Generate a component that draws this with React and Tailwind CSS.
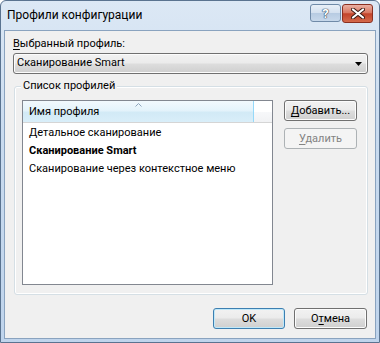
import React from "react";

const font = { fontFamily: 'Roboto, "Liberation Sans", sans-serif' };

function WinButton({ children, className = "", isDefault = false, disabled = false }) {
  const base = "flex items-center justify-center h-[21px] rounded-[3px] border text-[11px] leading-none";
  if (disabled) {
    return (
      <div className={`${base} border-[#adb2b5] bg-[#f4f4f4] text-[#838383] ${className}`}>{children}</div>
    );
  }
  return (
    <div
      className={`${base} ${isDefault ? "border-[#3c7fb1] shadow-[inset_0_0_0_1px_#c0e8f9]" : "border-[#707070] shadow-[inset_0_0_0_1px_#fcfcfc]"} bg-[linear-gradient(to_bottom,#f2f2f2_0%,#ebebeb_48%,#dddddd_52%,#cfcfcf_100%)] text-black ${className}`}
    >
      {children}
    </div>
  );
}

export default function App() {
  return (
    <div
      className="w-[380px] h-[343px] flex flex-col border border-[#5a7390] rounded-t-[6px] bg-[linear-gradient(to_bottom,#dce8f5_0%,#c9dbef_40%,#bfd4ec_100%)] overflow-hidden"
      style={font}
    >
      {/* title bar */}
      <div className="h-[29px] flex items-start shrink-0">
        <div className="pl-[6px] pt-[6px] text-[12px] leading-[16px] text-black">Профили конфигурации</div>
        <div className="ml-auto flex gap-[1px] pt-[3px] pr-[6px]">
          <div className="w-[31px] h-[18px] rounded-[3px] border border-[#6f8aa8] bg-[linear-gradient(to_bottom,#e9f0f8_0%,#d3e0ef_50%,#b7cbe2_52%,#c7d8eb_100%)] flex items-center justify-center">
            <span
              className="text-[13px] font-bold leading-none text-white"
              style={{ textShadow: "0 0 1px #2a3f57, 0 0 1px #2a3f57, 0 0 1px #2a3f57" }}
            >
              ?
            </span>
          </div>
          <div className="w-[31px] h-[19px] rounded-[3px] border border-[#8a2f20] bg-[linear-gradient(to_bottom,#eab0a3_0%,#d97862_45%,#c2432a_52%,#d46a4c_100%)] flex items-center justify-center">
            <svg width="14" height="11" viewBox="0 0 14 11">
              <path d="M2 1.5 L12 9.5 M12 1.5 L2 9.5" stroke="#3a1a14" strokeWidth="4" strokeLinecap="round" />
              <path d="M2 1.5 L12 9.5 M12 1.5 L2 9.5" stroke="#ffffff" strokeWidth="2.2" strokeLinecap="round" />
            </svg>
          </div>
        </div>
      </div>

      {/* client area */}
      <div className="flex-1 mx-[3px] mb-[3px] border border-[#8aa3bf] bg-[#f0f0f0] flex flex-col text-[11px] text-black">
        <div className="pl-[8px] pt-[5px] leading-[16px]">
          <span className="underline underline-offset-2">В</span>ыбранный профиль:
        </div>

        {/* combobox */}
        <div className="ml-[8px] mr-[7px] mt-[1px] h-[21px] rounded-[3px] border border-[#707070] bg-[linear-gradient(to_bottom,#f2f2f2_0%,#ebebeb_48%,#dddddd_52%,#cfcfcf_100%)] shadow-[inset_0_0_0_1px_#fcfcfc] flex items-center pl-[3px] pr-[5px]">
          <span>Сканирование Smart</span>
          <svg className="ml-auto" width="7" height="4" viewBox="0 0 7 4">
            <path d="M0 0 H7 L3.5 4 Z" fill="#000" />
          </svg>
        </div>

        {/* group box */}
        <div className="relative ml-[9px] mr-[7px] mt-[12px] h-[209px] rounded-[3px] border border-[#d5dfe5] shadow-[inset_0_0_0_1px_#ffffff] flex pl-[7px] pt-[13px]">
          <span className="absolute left-[6px] top-[-9px] px-[2px] bg-[#f0f0f0] leading-[16px]">Список профилей</span>

          {/* list view */}
          <div className="w-[251px] h-[185px] border border-[#828790] bg-white flex flex-col">
            <div className="h-[22px] flex shrink-0 border-b border-[#d5d5d5]">
              <div className="relative w-[231px] h-full bg-[linear-gradient(to_bottom,#f2f9fd_0%,#e4f3fb_45%,#d2eaf6_55%,#d9eef9_100%)] border-r border-[#96d9f9] flex items-end pl-[6px] pb-[3px]">
                <svg className="absolute left-[112px] top-[2px]" width="7" height="4" viewBox="0 0 7 4">
                  <path d="M0.5 3.5 L3.5 0.5 L6.5 3.5" stroke="#8fa6bd" strokeWidth="1" fill="none" />
                </svg>
                <span className="leading-[15px]">Имя профиля</span>
              </div>
              <div className="flex-1 h-full bg-[linear-gradient(to_bottom,#ffffff_0%,#ffffff_50%,#f7f8fa_52%,#f1f2f4_100%)]" />
            </div>
            <div className="flex flex-col pt-[1px]">
              <div className="h-[18px] flex items-center pl-[6px]">Детальное сканирование</div>
              <div className="h-[18px] flex items-center pl-[6px] font-bold">Сканирование Smart</div>
              <div className="h-[18px] flex items-center pl-[6px]">Сканирование через контекстное меню</div>
            </div>
          </div>

          {/* side buttons */}
          <div className="ml-[11px] flex flex-col gap-[7px]">
            <WinButton className="w-[73px]">
              <span><span className="underline underline-offset-2">Д</span>обавить...</span>
            </WinButton>
            <WinButton className="w-[73px]" disabled>
              <span><span className="underline underline-offset-2">У</span>далить</span>
            </WinButton>
          </div>
        </div>

        {/* bottom buttons */}
        <div className="flex justify-end gap-[9px] mr-[8px] mt-[13px]">
          <WinButton className="w-[72px]" isDefault>OK</WinButton>
          <WinButton className="w-[73px]">
            <span>О<span className="underline underline-offset-2">т</span>мена</span>
          </WinButton>
        </div>
      </div>
    </div>
  );
}
